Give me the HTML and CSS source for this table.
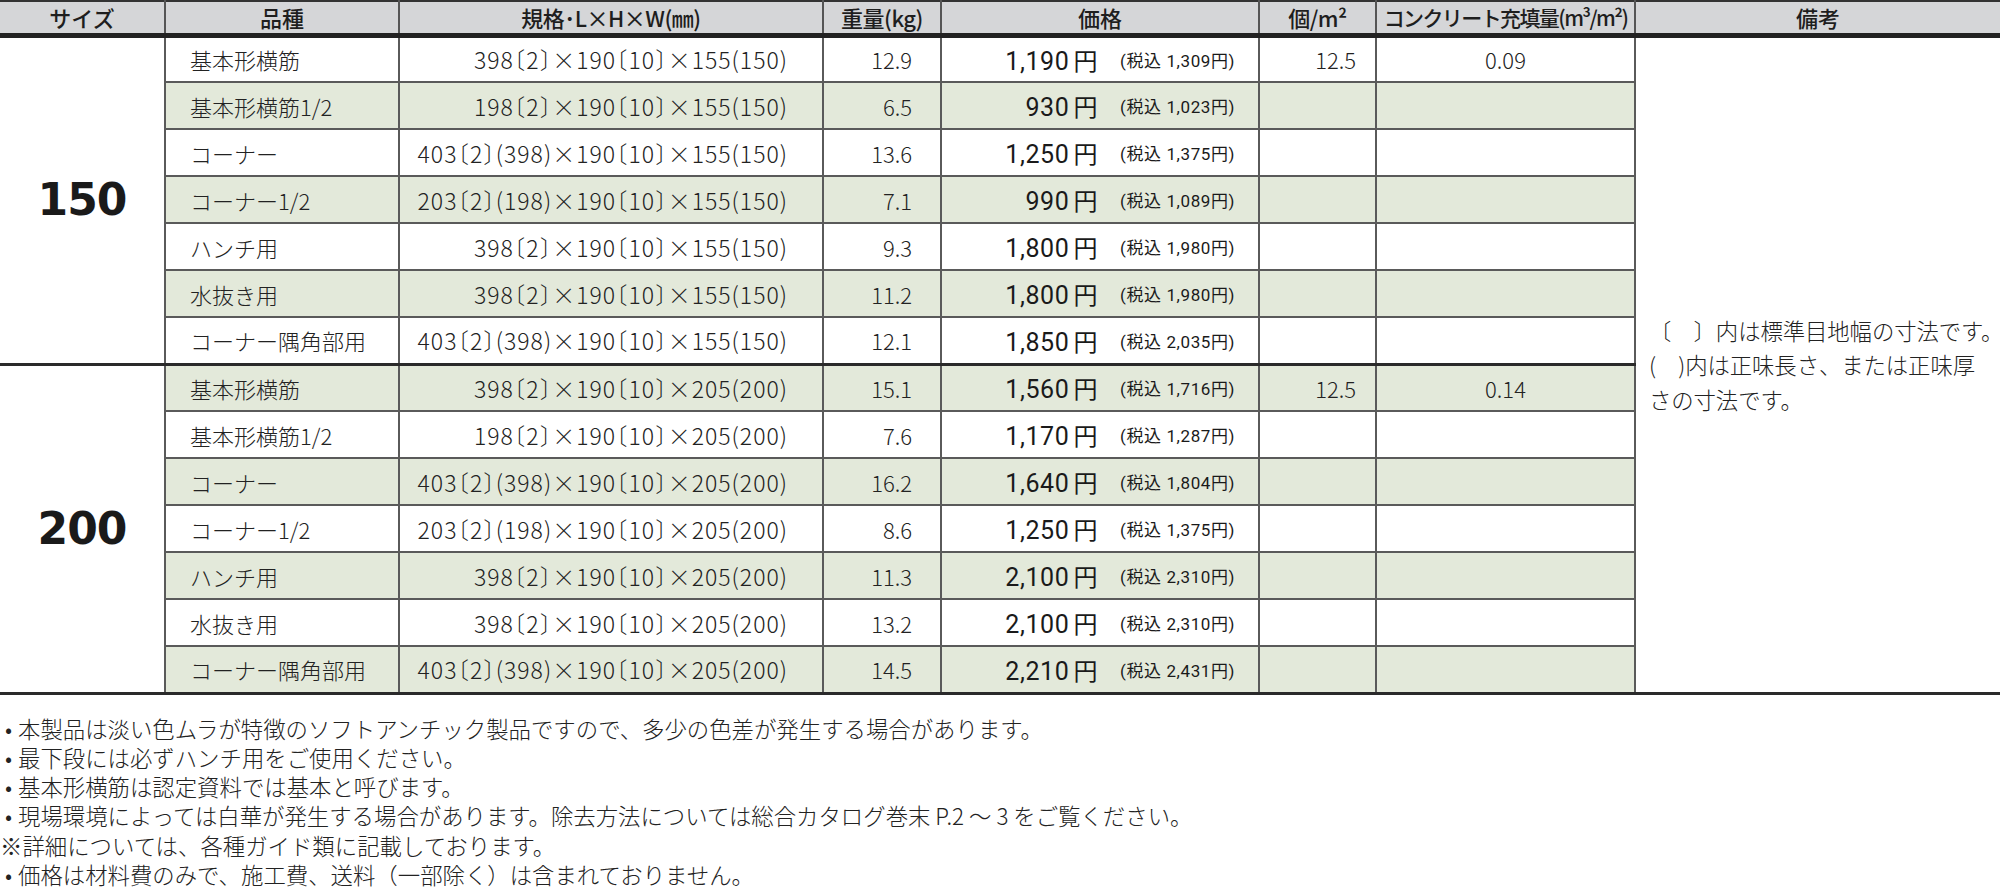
FILE: index.html
```html
<!DOCTYPE html>
<html lang="ja">
<head>
<meta charset="utf-8">
<title>製品規格表</title>
<link rel="stylesheet" href="styles.css">
</head>
<body>
<div class="page">
<table class="spec">
  <colgroup>
    <col class="c-size"><col class="c-name"><col class="c-dim"><col class="c-wt"><col class="c-price"><col class="c-qty"><col class="c-fill"><col class="c-note">
  </colgroup>
  <thead>
    <tr>
      <th>サイズ</th>
      <th>品種</th>
      <th class="tight">規格･L×H×W(㎜)</th>
      <th class="tight">重量(kg)</th>
      <th>価格</th>
      <th class="tight">個/m²</th>
      <th class="tighter">コンクリート充填量(m³/m²)</th>
      <th>備考</th>
    </tr>
  </thead>
  <tbody>
    <tr class="w">
      <td class="size" rowspan="7">150</td>
      <td class="name">基本形横筋</td>
      <td class="dim">398〔2〕×190〔10〕×155(150)</td>
      <td class="wt">12.9</td>
      <td class="price"><span class="main">1,190<span class="yen">円</span></span><span class="tax">(税込 1,309円)</span></td>
      <td class="qty">12.5</td>
      <td class="fill">0.09</td>
      <td class="note" rowspan="14"><p class="note-text">〔　〕内は標準目地幅の寸法です。<br>(　)内は正味長さ、または正味厚<br>さの寸法です。</p></td>
    </tr>
    <tr class="g">
      <td class="name">基本形横筋1/2</td>
      <td class="dim">198〔2〕×190〔10〕×155(150)</td>
      <td class="wt">6.5</td>
      <td class="price"><span class="main">930<span class="yen">円</span></span><span class="tax">(税込 1,023円)</span></td>
      <td class="qty"></td>
      <td class="fill"></td>
    </tr>
    <tr class="w">
      <td class="name">コーナー</td>
      <td class="dim">403〔2〕(398)×190〔10〕×155(150)</td>
      <td class="wt">13.6</td>
      <td class="price"><span class="main">1,250<span class="yen">円</span></span><span class="tax">(税込 1,375円)</span></td>
      <td class="qty"></td>
      <td class="fill"></td>
    </tr>
    <tr class="g">
      <td class="name">コーナー1/2</td>
      <td class="dim">203〔2〕(198)×190〔10〕×155(150)</td>
      <td class="wt">7.1</td>
      <td class="price"><span class="main">990<span class="yen">円</span></span><span class="tax">(税込 1,089円)</span></td>
      <td class="qty"></td>
      <td class="fill"></td>
    </tr>
    <tr class="w">
      <td class="name">ハンチ用</td>
      <td class="dim">398〔2〕×190〔10〕×155(150)</td>
      <td class="wt">9.3</td>
      <td class="price"><span class="main">1,800<span class="yen">円</span></span><span class="tax">(税込 1,980円)</span></td>
      <td class="qty"></td>
      <td class="fill"></td>
    </tr>
    <tr class="g">
      <td class="name">水抜き用</td>
      <td class="dim">398〔2〕×190〔10〕×155(150)</td>
      <td class="wt">11.2</td>
      <td class="price"><span class="main">1,800<span class="yen">円</span></span><span class="tax">(税込 1,980円)</span></td>
      <td class="qty"></td>
      <td class="fill"></td>
    </tr>
    <tr class="w">
      <td class="name">コーナー隅角部用</td>
      <td class="dim">403〔2〕(398)×190〔10〕×155(150)</td>
      <td class="wt">12.1</td>
      <td class="price"><span class="main">1,850<span class="yen">円</span></span><span class="tax">(税込 2,035円)</span></td>
      <td class="qty"></td>
      <td class="fill"></td>
    </tr>
    <tr class="g sep">
      <td class="size" rowspan="7">200</td>
      <td class="name">基本形横筋</td>
      <td class="dim">398〔2〕×190〔10〕×205(200)</td>
      <td class="wt">15.1</td>
      <td class="price"><span class="main">1,560<span class="yen">円</span></span><span class="tax">(税込 1,716円)</span></td>
      <td class="qty">12.5</td>
      <td class="fill">0.14</td>
    </tr>
    <tr class="w">
      <td class="name">基本形横筋1/2</td>
      <td class="dim">198〔2〕×190〔10〕×205(200)</td>
      <td class="wt">7.6</td>
      <td class="price"><span class="main">1,170<span class="yen">円</span></span><span class="tax">(税込 1,287円)</span></td>
      <td class="qty"></td>
      <td class="fill"></td>
    </tr>
    <tr class="g">
      <td class="name">コーナー</td>
      <td class="dim">403〔2〕(398)×190〔10〕×205(200)</td>
      <td class="wt">16.2</td>
      <td class="price"><span class="main">1,640<span class="yen">円</span></span><span class="tax">(税込 1,804円)</span></td>
      <td class="qty"></td>
      <td class="fill"></td>
    </tr>
    <tr class="w">
      <td class="name">コーナー1/2</td>
      <td class="dim">203〔2〕(198)×190〔10〕×205(200)</td>
      <td class="wt">8.6</td>
      <td class="price"><span class="main">1,250<span class="yen">円</span></span><span class="tax">(税込 1,375円)</span></td>
      <td class="qty"></td>
      <td class="fill"></td>
    </tr>
    <tr class="g">
      <td class="name">ハンチ用</td>
      <td class="dim">398〔2〕×190〔10〕×205(200)</td>
      <td class="wt">11.3</td>
      <td class="price"><span class="main">2,100<span class="yen">円</span></span><span class="tax">(税込 2,310円)</span></td>
      <td class="qty"></td>
      <td class="fill"></td>
    </tr>
    <tr class="w">
      <td class="name">水抜き用</td>
      <td class="dim">398〔2〕×190〔10〕×205(200)</td>
      <td class="wt">13.2</td>
      <td class="price"><span class="main">2,100<span class="yen">円</span></span><span class="tax">(税込 2,310円)</span></td>
      <td class="qty"></td>
      <td class="fill"></td>
    </tr>
    <tr class="g">
      <td class="name">コーナー隅角部用</td>
      <td class="dim">403〔2〕(398)×190〔10〕×205(200)</td>
      <td class="wt">14.5</td>
      <td class="price"><span class="main">2,210<span class="yen">円</span></span><span class="tax">(税込 2,431円)</span></td>
      <td class="qty"></td>
      <td class="fill"></td>
    </tr>
  </tbody>
</table>

<ul class="notes">
  <li><span class="bullet">•</span>本製品は淡い色ムラが特徴のソフトアンチック製品ですので、多少の色差が発生する場合があります。</li>
  <li><span class="bullet">•</span>最下段には必ずハンチ用をご使用ください。</li>
  <li><span class="bullet">•</span>基本形横筋は認定資料では基本と呼びます。</li>
  <li><span class="bullet">•</span>現場環境によっては白華が発生する場合があります。除去方法については総合カタログ巻末 P.2 ～ 3 をご覧ください。</li>
  <li class="ref">※詳細については、各種ガイド類に記載しております。</li>
  <li><span class="bullet">•</span>価格は材料費のみで、施工費、送料（一部除く）は含まれておりません。</li>
</ul>
</div>
</body>
</html>
```

FILE: styles.css
```css
* { box-sizing: border-box; }

html, body {
  margin: 0;
  padding: 0;
  background: #ffffff;
}

body {
  font-family: "Noto Sans CJK JP", "Noto Sans", sans-serif;
  color: #222222;
  font-size: 22px;
}

.page {
  width: 2000px;
}

.spec {
  width: 2000px;
  border-collapse: collapse;
  table-layout: fixed;
  border-bottom: 3px solid #2a2a2a;
}

.c-size { width: 165px; }
.c-name { width: 234px; }
.c-dim { width: 424px; }
.c-wt { width: 118px; }
.c-price { width: 318px; }
.c-qty { width: 117px; }
.c-fill { width: 259px; }
.c-note { width: 365px; }

.spec th {
  background: #d5d6d8;
  height: 34px;
  padding: 0;
  font-weight: 500;
  font-size: 22px;
  line-height: 30px;
  text-align: center;
  color: #1e1e1e;
  border-top: 2px solid #333333;
  border-bottom: 5px solid #222222;
  border-left: 2px solid #555555;
  border-right: 2px solid #555555;
  white-space: nowrap;
  overflow: hidden;
}

.spec th:first-child { border-left: none; }
.spec th:last-child { border-right: none; }

.spec th.tight { letter-spacing: -0.5px; }
.spec th.tighter { letter-spacing: -1.6px; font-size: 21px; }

.spec td {
  height: 47px;
  padding: 0;
  border: 2px solid #5a5a5a;
  white-space: nowrap;
  font-size: 22px;
  font-weight: 300;
  line-height: 30px;
  vertical-align: middle;
}

.spec tr.g td { background: #e3e9da; }
.spec tr td.size,
.spec tr td.note { background: #ffffff; }

.spec td.size {
  border-left: none;
  text-align: center;
  font-family: "DejaVu Sans", sans-serif;
  font-weight: 700;
  font-size: 44px;
  letter-spacing: -1px;
  color: #1a1a1a;
}

.spec td.note {
  border-right: none;
  vertical-align: middle;
  padding-left: 13px;
}

.note-text {
  margin: 0;
  font-size: 22.4px;
  line-height: 34.5px;
  letter-spacing: -0.1px;
}

.spec tr.sep td {
  border-top: 3px solid #2a2a2a;
}

.spec td.name {
  padding-left: 24px;
  text-align: left;
}

.spec td.dim {
  text-align: right;
  padding-right: 34px;
  font-size: 23px;
  font-feature-settings: "halt" 1;
  letter-spacing: 1px;
}

.spec td.wt {
  text-align: right;
  padding-right: 28px;
}

.spec td.qty {
  text-align: right;
  padding-right: 19px;
}

.spec td.fill {
  text-align: center;
}

.spec td.price {
  padding: 0;
}

.price .main {
  display: inline-block;
  width: 156px;
  text-align: right;
  font-family: "Roboto", "Noto Sans CJK JP", sans-serif;
  font-weight: 400;
  font-size: 25px;
  letter-spacing: 0.6px;
  color: #1a1a1a;
  vertical-align: middle;
}

.price .yen {
  margin-left: 4px;
  font-family: "Noto Sans CJK JP", sans-serif;
  font-weight: 400;
  font-size: 24px;
}

.price .tax {
  display: inline-block;
  margin-left: 22px;
  font-family: "Roboto", "Noto Sans CJK JP", sans-serif;
  font-weight: 400;
  font-size: 17px;
  letter-spacing: 0.6px;
  vertical-align: middle;
  color: #1a1a1a;
}

.notes {
  list-style: none;
  margin: 19px 0 0 0;
  padding: 0;
  font-size: 22.4px;
  font-weight: 300;
  line-height: 29.3px;
}

.notes li {
  white-space: nowrap;
}

.notes .bullet {
  display: inline-block;
  width: 18px;
  padding-left: 5px;
}
```
